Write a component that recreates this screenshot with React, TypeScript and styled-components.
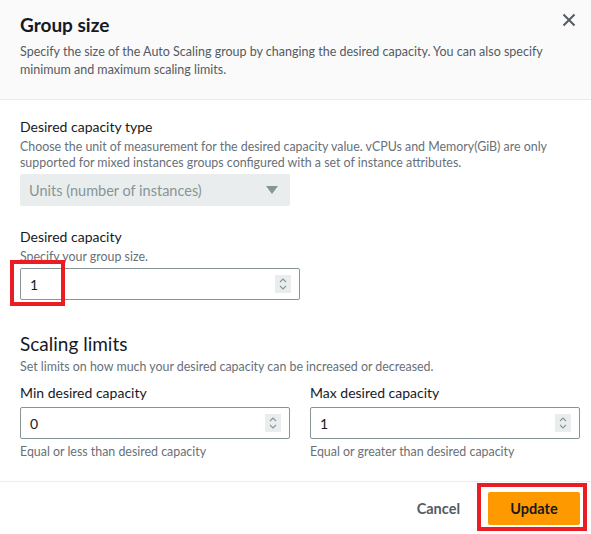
import styled, { createGlobalStyle } from "styled-components";

const GlobalStyle = createGlobalStyle`
  html, body {
    margin: 0;
    padding: 0;
    background: #ffffff;
  }
  body {
    font-family: Lato, "Open Sans", "Liberation Sans", sans-serif;
    color: #16191f;
  }
`;

const Modal = styled.div`
  width: 591px;
  height: 534px;
  display: flex;
  flex-direction: column;
  background: #ffffff;
  overflow: hidden;
`;

const Header = styled.div`
  position: relative;
  background: #fafafa;
  border-bottom: 1px solid #eaeded;
  padding: 12px 20px 0 20px;
  height: 87px;
`;

const Title = styled.h2`
  margin: 0;
  font-size: 19px;
  font-weight: 700;
  line-height: 26px;
  color: #16191f;
`;

const HeaderText = styled.p`
  margin: 5px 0 0 0;
  font-size: 12.5px;
  line-height: 18px;
  color: #545b64;
`;

const CloseButton = styled.button`
  position: absolute;
  top: 10px;
  right: 12px;
  width: 20px;
  height: 20px;
  padding: 0;
  border: none;
  background: none;
  display: flex;
  align-items: center;
  justify-content: center;
`;

const Body = styled.div`
  flex: 1;
  padding: 17px 20px 0 20px;
  display: flex;
  flex-direction: column;
`;

const Field = styled.div<{ $mb?: number }>`
  display: flex;
  flex-direction: column;
  margin-bottom: ${(p) => p.$mb ?? 0}px;
`;

const Label = styled.div`
  font-size: 14px;
  line-height: 20px;
  color: #16191f;
`;

const Hint = styled.div`
  margin-top: 2px;
  font-size: 12.4px;
  line-height: 16px;
  color: #687078;
`;

const Select = styled.div`
  margin-top: 3px;
  width: 270px;
  height: 32px;
  box-sizing: border-box;
  background: #eaeded;
  border-radius: 2px;
  display: flex;
  align-items: center;
  justify-content: space-between;
  padding: 0 12px 0 9px;
  font-size: 14.5px;
  color: #879596;
`;

const InputWrap = styled.div<{ $mt: number }>`
  position: relative;
  margin-top: ${(p) => p.$mt}px;
`;

const Input = styled.div`
  height: 32px;
  box-sizing: border-box;
  border: 1px solid #879596;
  border-radius: 2px;
  display: flex;
  align-items: center;
  justify-content: space-between;
  padding: 0 8px 0 9px;
  font-size: 14px;
  color: #16191f;
`;

const Spinner = styled.div`
  width: 16px;
  height: 18px;
  background: #eaeded;
  display: flex;
  align-items: center;
  justify-content: center;
`;

const Highlight = styled.div<{ $top: number; $left: number; $w: number; $h: number }>`
  position: absolute;
  top: ${(p) => p.$top}px;
  left: ${(p) => p.$left}px;
  width: ${(p) => p.$w}px;
  height: ${(p) => p.$h}px;
  box-sizing: border-box;
  border: 4px solid #ec1c24;
  pointer-events: none;
`;

const SectionTitle = styled.h3`
  margin: 0;
  font-size: 19px;
  font-weight: 400;
  line-height: 24px;
  color: #16191f;
`;

const SectionHint = styled(Hint)`
  margin-top: 3px;
`;

const Columns = styled.div`
  display: grid;
  grid-template-columns: 270px 270px;
  column-gap: 20px;
  margin-top: 8px;
`;

const FieldHint = styled(Hint)`
  margin-top: 5px;
`;

const Footer = styled.div`
  border-top: 1px solid #eaeded;
  height: 52px;
  display: flex;
  align-items: center;
  justify-content: flex-end;
  gap: 28px;
  padding: 0 11px 0 20px;
`;

const LinkButton = styled.button`
  border: none;
  background: none;
  padding: 0;
  font-family: inherit;
  font-size: 14.5px;
  font-weight: 700;
  color: #545b64;
`;

const PrimaryWrap = styled.div`
  position: relative;
`;

const PrimaryButton = styled.button`
  width: 92px;
  height: 33px;
  border: none;
  border-radius: 2px;
  background: #ff9900;
  font-family: inherit;
  font-size: 14.5px;
  font-weight: 700;
  color: #16191f;
`;

const Caret = () => (
  <svg width="12" height="8" viewBox="0 0 12 8">
    <path d="M0 0h12L6 8z" fill="#879596" />
  </svg>
);

const Spin = () => (
  <Spinner>
    <svg width="10" height="14" viewBox="0 0 10 14">
      <path d="M2 5l3-3 3 3M2 9l3 3 3-3" fill="none" stroke="#879596" strokeWidth="1.1" />
    </svg>
  </Spinner>
);

const NumberInput = ({ value, width }: { value: string; width: number }) => (
  <Input style={{ width }}>
    <span>{value}</span>
    <Spin />
  </Input>
);

const App = () => {
  return (
    <Modal>
      <GlobalStyle />
      <Header>
        <Title>Group size</Title>
        <HeaderText>
          Specify the size of the Auto Scaling group by changing the desired capacity. You can also specify
          minimum and maximum scaling limits.
        </HeaderText>
        <CloseButton>
          <svg width="14" height="14" viewBox="0 0 14 14">
            <path d="M1.5 1.5l11 11M12.5 1.5l-11 11" stroke="#545b64" strokeWidth="2" />
          </svg>
        </CloseButton>
      </Header>
      <Body>
        <Field $mb={21}>
          <Label>Desired capacity type</Label>
          <Hint>
            Choose the unit of measurement for the desired capacity value. vCPUs and Memory(GiB) are only
            supported for mixed instances groups configured with a set of instance attributes.
          </Hint>
          <Select>
            <span>Units (number of instances)</span>
            <Caret />
          </Select>
        </Field>
        <Field $mb={32}>
          <Label>Desired capacity</Label>
          <Hint>Specify your group size.</Hint>
          <InputWrap $mt={3}>
            <NumberInput value="1" width={280} />
            <Highlight $top={-8} $left={-10} $w={55} $h={46} />
          </InputWrap>
        </Field>
        <SectionTitle>Scaling limits</SectionTitle>
        <SectionHint>Set limits on how much your desired capacity can be increased or decreased.</SectionHint>
        <Columns>
          <Field>
            <Label>Min desired capacity</Label>
            <InputWrap $mt={4}>
              <NumberInput value="0" width={270} />
            </InputWrap>
            <FieldHint>Equal or less than desired capacity</FieldHint>
          </Field>
          <Field>
            <Label>Max desired capacity</Label>
            <InputWrap $mt={4}>
              <NumberInput value="1" width={270} />
            </InputWrap>
            <FieldHint>Equal or greater than desired capacity</FieldHint>
          </Field>
        </Columns>
      </Body>
      <Footer>
        <LinkButton>Cancel</LinkButton>
        <PrimaryWrap>
          <PrimaryButton>Update</PrimaryButton>
          <Highlight $top={-9} $left={-11} $w={110} $h={48} />
        </PrimaryWrap>
      </Footer>
    </Modal>
  );
};

export default App;
